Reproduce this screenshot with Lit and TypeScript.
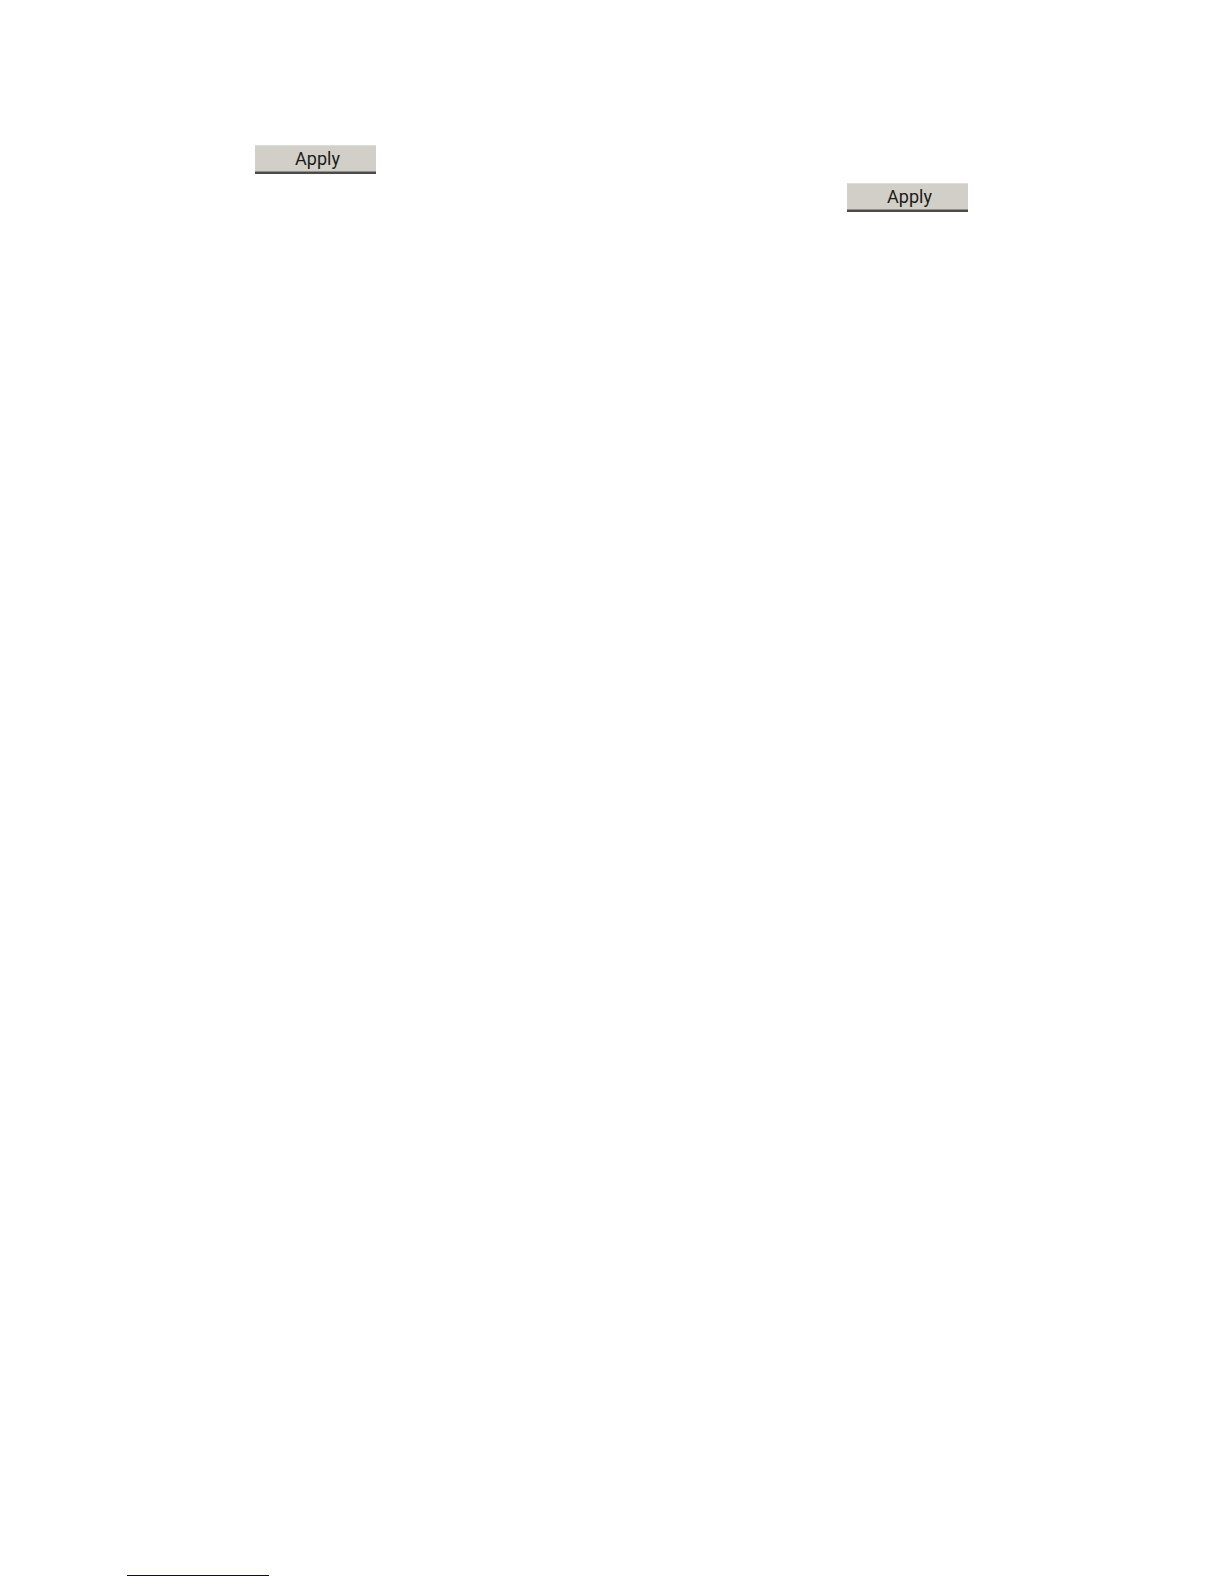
import { LitElement, html, css } from "lit";
import { customElement } from "lit/decorators.js";

@customElement("apply-button")
export class ApplyButton extends LitElement {
  static styles = css`
    :host {
      display: block;
    }
    .button {
      display: flex;
      align-items: center;
      justify-content: center;
      box-sizing: border-box;
      min-width: 121px;
      min-height: 29px;
      margin: 0;
      padding: 0 4px 0 8px;
      border: 0;
      border-top: 1px solid #dddcd8;
      border-bottom: 2px solid #4b4b4b;
      border-radius: 0;
      background: #d1cfc8;
      box-shadow: inset 0 -1px 0 #8f8e8b;
      color: #1c1b18;
      font-family: Roboto, "Liberation Sans", sans-serif;
      font-size: 18px;
      line-height: 24px;
    }
  `;

  render() {
    return html`<button class="button" type="button">Apply</button>`;
  }
}

@customElement("app-root")
export class AppRoot extends LitElement {
  static styles = css`
    :host {
      display: block;
      background: #ffffff;
    }
    .page {
      display: flex;
      flex-direction: column;
      box-sizing: border-box;
      min-height: 100vh;
      padding: 145px 128px 8px 127px;
    }
    .actions {
      display: flex;
      flex-direction: column;
      gap: 9px;
    }
    .row {
      display: flex;
      padding: 0 128px;
    }
    .end {
      justify-content: flex-end;
    }
    .footer {
      margin-top: auto;
    }
    .rule {
      width: 142px;
      height: 1px;
      margin: 0;
      border: 0;
      background: #000090;
    }
  `;

  render() {
    return html`
      <main class="page">
        <div class="actions">
          <div class="row"><apply-button></apply-button></div>
          <div class="row end"><apply-button></apply-button></div>
        </div>
        <footer class="footer"><hr class="rule" /></footer>
      </main>
    `;
  }
}
